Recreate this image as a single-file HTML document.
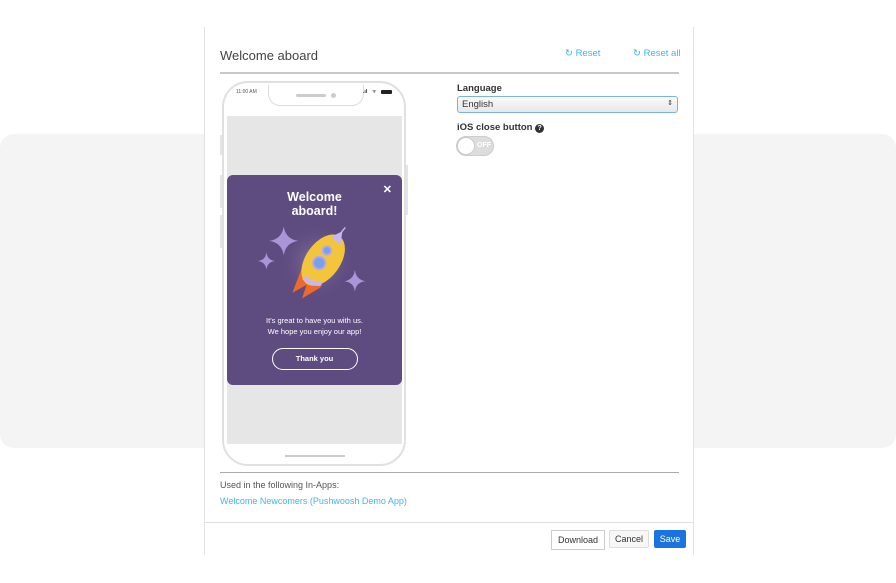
<!DOCTYPE html>
<html><head><meta charset="utf-8"><style>
*{box-sizing:border-box;margin:0;padding:0}
body{width:896px;height:583px;background:#fff;position:relative;overflow:hidden;font-family:"Liberation Sans",sans-serif}
.a{position:absolute}
</style></head><body>
<div class="a" style="left:0;top:134px;width:896px;height:314px;background:#f4f4f5;border-radius:14px"></div>
<div class="a" style="left:204px;top:27px;width:490px;height:528px;background:#fff;border-left:1px solid #e2e2e2;border-right:1px solid #e2e2e2"></div>
<div class="a" style="left:220px;top:48px;font-size:13px;color:#444">Welcome aboard</div>
<div class="a" style="left:565px;top:48px;font-size:9.5px;color:#3fb6e8">&#x21bb; Reset</div>
<div class="a" style="left:633px;top:48px;font-size:9.5px;color:#3fb6e8">&#x21bb; Reset all</div>
<div class="a" style="left:220px;top:72px;width:459px;height:2px;background:#c8c8c8"></div>

<!-- phone -->
<div class="a" style="left:220px;top:135px;width:3px;height:20px;background:#e4e4e4"></div>
<div class="a" style="left:220px;top:175px;width:3px;height:33px;background:#e4e4e4"></div>
<div class="a" style="left:220px;top:215px;width:3px;height:33px;background:#e4e4e4"></div>
<div class="a" style="left:405px;top:165px;width:3px;height:50px;background:#e4e4e4"></div>
<div class="a" style="left:222px;top:81px;width:184px;height:385px;border:2px solid #e0e0e0;border-radius:26px;background:#fff;overflow:hidden">
 <div class="a" style="left:3px;top:33px;width:175px;height:328px;background:#e6e6e6"></div>
 <div class="a" style="left:44px;top:2px;width:96px;height:21px;border:1px solid #ddd;border-top:none;border-radius:0 0 12px 12px;background:#fff"></div>
 <div class="a" style="left:72px;top:11px;width:30px;height:3px;background:#ccc;border-radius:2px"></div>
 <div class="a" style="left:107px;top:10px;width:5px;height:5px;background:#ccc;border-radius:50%"></div>
 <div class="a" style="left:12px;top:6px;font-size:5px;color:#555">11:00 AM</div>
 <div class="a" style="left:139px;top:6px;width:10px;height:5px;font-size:5px;color:#222;font-weight:bold">.ıl</div>
 <div class="a" style="left:148px;top:6px;font-size:5px;color:#222">ᯤ</div>
 <div class="a" style="left:157px;top:7px;width:11px;height:4px;background:#222;border-radius:1px"></div>
 <div class="a" style="left:61px;top:372px;width:60px;height:2px;background:#ccc"></div>
</div>
<div class="a" style="left:227px;top:175px;width:175px;height:210px;background:#5e4c80;border-radius:6px;color:#fff;text-align:center">
 <div class="a" style="right:10px;top:8px;font-size:11px;font-weight:bold">✕</div>
 <div style="margin-top:15px;font-size:12.5px;font-weight:bold;line-height:14px">Welcome<br>aboard!</div>
 <svg class="a" style="left:25px;top:45px" width="125" height="85" viewBox="0 0 130 85">
  <defs><radialGradient id="g"><stop offset="0" stop-color="#8a7aa8"/><stop offset="1" stop-color="#5e4c80" stop-opacity="0"/></radialGradient></defs>
  <circle cx="68" cy="42" r="40" fill="url(#g)"/>
  <path d="M33 5 Q35 18 48 20 Q35 22 33 35 Q31 22 18 20 Q31 18 33 5Z" fill="#a996d8"/>
  <path d="M15 32 Q16 40 24 41 Q16 42 15 50 Q14 42 6 41 Q14 40 15 32Z" fill="#a996d8"/>
  <path d="M107 50 Q108 60 118 62 Q108 63 107 73 Q106 63 96 62 Q106 60 107 50Z" fill="#a996d8"/>
  <path d="M52 48 L42 74 L60 64Z" fill="#ee6a2a"/>
  <path d="M60 56 L52 80 L72 68Z" fill="#ee6a2a"/>
  <ellipse cx="74" cy="40" rx="18" ry="30" transform="rotate(35 74 40)" fill="#f3c53a"/>
  <path d="M82 16 L94 10 L92 24Z" fill="#c9b6ee"/>
  <line x1="93" y1="11" x2="97" y2="6" stroke="#c9b6ee" stroke-width="1.5"/>
  <circle cx="78" cy="30" r="4.5" fill="#7aa0e8" stroke="#b7a8e8" stroke-width="2"/>
  <circle cx="70" cy="43" r="6.5" fill="#7aa0e8" stroke="#b7a8e8" stroke-width="2"/>
  <path d="M54 58 Q63 66 72 64" stroke="#c9b6ee" stroke-width="5" fill="none"/>
 </svg>
 <div style="margin-top:97px;font-size:7.5px;line-height:11px">It's great to have you with us.<br>We hope you enjoy our app!</div>
 <div style="margin:11px auto 0;width:86px;height:22px;border:1.5px solid #fff;border-radius:11px;font-size:7.5px;font-weight:bold;line-height:19px">Thank you</div>
</div>

<!-- right form -->
<div class="a" style="left:457px;top:83px;font-size:9.5px;font-weight:bold;color:#333">Language</div>
<div class="a" style="left:457px;top:96px;width:221px;height:17px;border:1px solid #7ab3e0;border-radius:3px;background:linear-gradient(#fafafa,#e8e8e8);font-size:9.5px;color:#333;padding:2px 4px">English<span style="position:absolute;right:4px;top:2px;font-size:7px">⇕</span></div>
<div class="a" style="left:457px;top:122px;font-size:9.5px;font-weight:bold;color:#333">iOS close button <span style="display:inline-block;width:9px;height:9px;border-radius:50%;background:#333;color:#fff;font-size:7px;text-align:center;line-height:9px">?</span></div>
<div class="a" style="left:456px;top:136px;width:38px;height:20px;border-radius:10px;background:#ddd;border:1px solid #ccc"><span style="position:absolute;left:20px;top:5px;font-size:7px;color:#fff;font-weight:bold">OFF</span><div style="position:absolute;left:0;top:0;width:18px;height:18px;border-radius:50%;background:#fff;border:1px solid #ccc"></div></div>

<div class="a" style="left:220px;top:472px;width:459px;height:1px;background:#aaa"></div>
<div class="a" style="left:220px;top:480px;font-size:9px;color:#555">Used in the following In-Apps:</div>
<div class="a" style="left:220px;top:496px;font-size:9px;color:#3fb6e8">Welcome Newcomers (Pushwoosh Demo App)</div>
<div class="a" style="left:205px;top:522px;width:488px;height:1px;background:#e0e0e0"></div>
<div class="a" style="left:551px;top:530px;width:54px;height:20px;border:1px solid #ccc;font-size:9px;color:#333;text-align:center;line-height:18px">Download</div>
<div class="a" style="left:609px;top:530px;width:40px;height:18px;border:1px solid #ddd;border-radius:2px;background:#f7f7f7;font-size:9px;color:#333;text-align:center;line-height:16px">Cancel</div>
<div class="a" style="left:654px;top:530px;width:32px;height:18px;border-radius:2px;background:#1a73e0;font-size:9px;color:#fff;text-align:center;line-height:18px">Save</div>
</body></html>
